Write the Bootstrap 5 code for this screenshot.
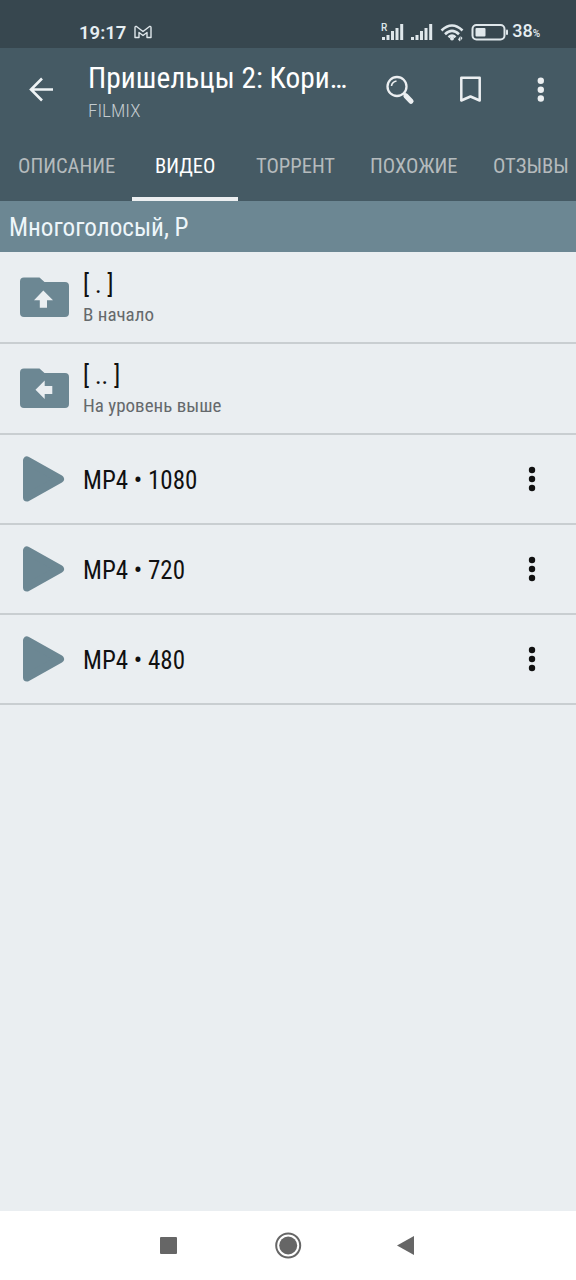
<!DOCTYPE html>
<html lang="ru">
<head>
<meta charset="utf-8">
<meta name="viewport" content="width=device-width, initial-scale=1">
<title>Filmix</title>
<link href="https://cdn.jsdelivr.net/npm/bootstrap@5.3.0/dist/css/bootstrap.min.css" rel="stylesheet">
<style>
body{background:#eaeef1;font-family:"Roboto Condensed",Roboto,sans-serif;font-stretch:75%;color:#111;height:1280px;overflow:hidden}
svg{display:block;flex:none}
.status-bar{height:48px;background:#37474f;color:#e6eef2;font-family:Roboto,sans-serif;font-stretch:100%;padding:0 36px 0 79px}
.clock{font-size:18.5px;font-weight:600;line-height:20px;margin-top:17px}
.battery-text{font-size:18px;font-weight:500;line-height:20px;margin:17px 0 0 2px}
.battery-text small{font-size:10px}
.mail-mark{margin-left:7px}
.app-header{background:#455a64}
.toolbar{height:83px;padding:0 28px}
.title-box{margin-left:34px;width:264px;height:66px;padding-top:3px}
.title-text{font-size:29.4px;line-height:36px;color:#fff;white-space:nowrap}
.sub-text{font-size:19.2px;font-weight:350;line-height:30px;color:#c3cbcf}
.tab-strip{height:70px;flex-wrap:nowrap}
.tab-strip .nav-link{padding:0 0 0 18px;color:#b5bbbd;font-size:20.6px;font-weight:370;line-height:71px;height:70px;white-space:nowrap;border-bottom:0}
.tab-strip .nav-link.active{color:#fff;font-weight:400;padding-left:23px;box-shadow:inset 0 -4px #eceff1}
.section-bar{height:51px;background:#6c8793;color:#eef6fa;font-size:25.2px;line-height:54px;padding-left:9px}
.entries{padding-top:1px}
.list-group-item.entry{background:transparent;border:solid #c9ced1;border-width:0 0 2px;color:#111;height:90px;padding:0 35px 0 19px}
.list-group-item.entry.tall{height:91px}
.entry-icon{width:64px}
.tall .entry-icon{padding-bottom:2px}
.entry-name{font-size:25px;line-height:30px;padding-top:4px}
.entry-note{font-size:19px;line-height:28px;color:#65696c;padding-top:1px}
.nav-keys{height:69px;background:#fff}
</style>
</head>
<body class="d-flex flex-column">
<div class="status-bar d-flex align-items-center flex-shrink-0">
  <span class="clock">19:17</span>
  <svg class="mail-mark mt-3" width="20" height="14" viewBox="0 0 20 14" fill="none" stroke="#dfe7eb" stroke-width="1.4"><path d="M2 12.500V2.500Q2 1 3.500 1.500L10 6.500 16.500 1.500Q18 1 18 2.500V12.500H14V7.500L10 10.500 6 7.500V12.500Z" stroke-linejoin="round"/></svg>
  <div class="ms-auto d-flex align-items-center">
    <svg class="mt-3" width="130" height="30" viewBox="380 17 130 30" fill="#dfe7eb">
      <text x="381" y="31" font-size="10" font-weight="500">R</text>
      <path d="M382 37h3v3h-3zM386.500 35h3v5h-3zM391 31h3v9h-3zM395.500 28h3v12h-3zM400.200 24h3v16h-3zM411 37h3v3h-3zM415.500 35h3v5h-3zM420 31h3v9h-3zM424.500 28h3v12h-3zM429.200 24h3v16h-3z"/>
      <g fill="none" stroke="#dfe7eb" stroke-width="2.600"><path d="M441.500 30.500Q452 20.500 462.500 30.500M445 34.200Q452 27.500 459 34.200"/><path d="M448.500 37.200Q452 34.200 455.500 37.200"/></g>
      <circle cx="452" cy="38.500" r="2"/><path d="M458 39.500l2-3v5zM462.500 38l-2 3v-5z" />
      <rect x="472.500" y="25" width="32" height="14.500" rx="4" fill="none" stroke="#dfe7eb" stroke-width="2"/>
      <rect x="475.500" y="28" width="10" height="8.500" rx="1"/><rect x="506" y="29.500" width="2" height="5.500" rx="1"/>
    </svg>
    <span class="battery-text">38<small>%</small></span>
  </div>
</div>
<header class="app-header flex-shrink-0">
  <div class="toolbar d-flex align-items-center">
    <svg width="26" height="26" viewBox="28 77 26 26" fill="none" stroke="#eef3f5" stroke-width="2.600"><path d="M53 89.500H31.500M42 78.500L31 89.500 42 100.500"/></svg>
    <div class="title-box d-flex flex-column">
      <span class="title-text">Пришельцы 2: Кори…</span>
      <span class="sub-text">FILMIX</span>
    </div>
    <svg class="ms-auto" width="166" height="40" viewBox="382 69.500 166 40" fill="none" stroke="#eceff1">
      <circle cx="397" cy="86" r="9.500" stroke-width="2.300"/><path d="M391.500 85.500Q392 81.500 396.500 80.500" stroke-width="1.600"/><path d="M403.500 92.500l2 2" stroke-width="2.500"/><path d="M406 95.500l5 5.200" stroke-width="5.200" stroke-linecap="round"/>
      <path d="M461.300 77.200H479.700V100L470.500 96 461.300 100Z" stroke-width="2.500" stroke-linejoin="round"/>
      <g fill="#eceff1" stroke="none"><circle cx="540.800" cy="80.300" r="3.200"/><circle cx="540.800" cy="89.200" r="3.200"/><circle cx="540.800" cy="98" r="3.200"/></g>
    </svg>
  </div>
  <nav class="nav tab-strip">
    <a class="nav-link" style="width:132px">ОПИСАНИЕ</a>
    <a class="nav-link active" style="width:106px">ВИДЕО</a>
    <a class="nav-link" style="width:114px">ТОРРЕНТ</a>
    <a class="nav-link" style="width:123px">ПОХОЖИЕ</a>
    <a class="nav-link" style="width:101px">ОТЗЫВЫ</a>
  </nav>
</header>
<div class="section-bar flex-shrink-0">Многоголосый, Р</div>
<main class="entries list-group list-group-flush flex-grow-1">
  <div class="list-group-item entry tall d-flex align-items-center">
    <div class="entry-icon"><svg width="51" height="42" viewBox="0 0 51 42"><path fill="#6c8793" d="M5 1.500H20.500L25.500 6H46Q50 6 50 10V37Q50 41 46 41H5Q1 41 1 37V5.500Q1 1.500 5 1.500Z"/><path fill="#eaeef1" d="M24.300 14.500L34 24.300H28V31.800H20.800V24.300H15Z"/></svg></div>
    <div class="d-flex flex-column"><span class="entry-name">[ . ]</span><span class="entry-note">В начало</span></div>
  </div>
  <div class="list-group-item entry tall d-flex align-items-center">
    <div class="entry-icon"><svg width="51" height="42" viewBox="0 0 51 42"><path fill="#6c8793" d="M5 1.500H20.500L25.500 6H46Q50 6 50 10V37Q50 41 46 41H5Q1 41 1 37V5.500Q1 1.500 5 1.500Z"/><path fill="#eaeef1" d="M16.500 22.800L25.700 13.500V19H33.300V27H25.700V32Z"/></svg></div>
    <div class="d-flex flex-column"><span class="entry-name">[ .. ]</span><span class="entry-note">На уровень выше</span></div>
  </div>
  <div class="list-group-item entry d-flex align-items-center">
    <div class="entry-icon"><svg width="48" height="48" viewBox="0 0 48 48"><path d="M8 5.500V42.500L41 24Z" fill="#6c8793" stroke="#6c8793" stroke-width="8" stroke-linejoin="round"/></svg></div>
    <span class="entry-name">MP4 • 1080</span>
    <svg class="ms-auto" width="18" height="30" viewBox="0 0 18 30" fill="#111"><circle cx="9" cy="6" r="3.200"/><circle cx="9" cy="15" r="3.200"/><circle cx="9" cy="24" r="3.200"/></svg>
  </div>
  <div class="list-group-item entry d-flex align-items-center">
    <div class="entry-icon"><svg width="48" height="48" viewBox="0 0 48 48"><path d="M8 5.500V42.500L41 24Z" fill="#6c8793" stroke="#6c8793" stroke-width="8" stroke-linejoin="round"/></svg></div>
    <span class="entry-name">MP4 • 720</span>
    <svg class="ms-auto" width="18" height="30" viewBox="0 0 18 30" fill="#111"><circle cx="9" cy="6" r="3.200"/><circle cx="9" cy="15" r="3.200"/><circle cx="9" cy="24" r="3.200"/></svg>
  </div>
  <div class="list-group-item entry border-bottom-2 d-flex align-items-center" style="border-bottom-width:2px">
    <div class="entry-icon"><svg width="48" height="48" viewBox="0 0 48 48"><path d="M8 5.500V42.500L41 24Z" fill="#6c8793" stroke="#6c8793" stroke-width="8" stroke-linejoin="round"/></svg></div>
    <span class="entry-name">MP4 • 480</span>
    <svg class="ms-auto" width="18" height="30" viewBox="0 0 18 30" fill="#111"><circle cx="9" cy="6" r="3.200"/><circle cx="9" cy="15" r="3.200"/><circle cx="9" cy="24" r="3.200"/></svg>
  </div>
</main>
<footer class="nav-keys d-flex justify-content-center flex-shrink-0">
  <svg width="576" height="69" viewBox="0 1211 576 69" fill="#666"><rect x="160" y="1237" width="17" height="17" rx="1"/><circle cx="288.200" cy="1245.500" r="9"/><circle cx="288.200" cy="1245.500" r="12" fill="none" stroke="#666" stroke-width="2"/><path d="M397 1245.500L414 1236V1255Z"/></svg>
</footer>
<script src="https://cdn.jsdelivr.net/npm/bootstrap@5.3.0/dist/js/bootstrap.bundle.min.js"></script>
</body>
</html>
